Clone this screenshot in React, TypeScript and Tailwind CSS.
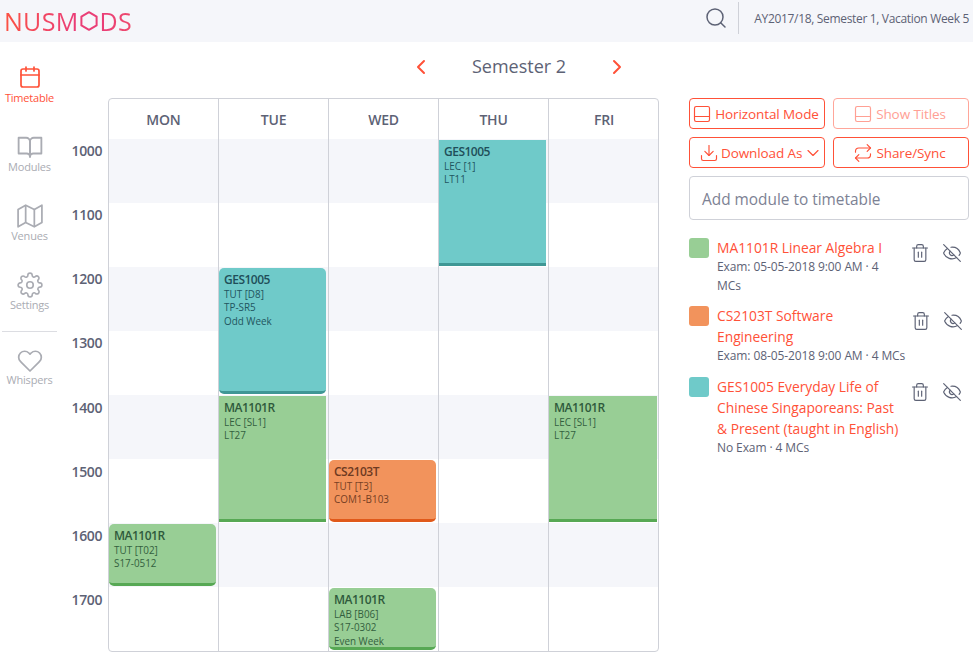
import { Calendar, ChevronDown, ChevronLeft, ChevronRight, Download, EyeOff, PanelBottom, Repeat, Search, Trash2 } from 'lucide-react';

const FONT = "font-['Open_Sans','Noto_Sans',sans-serif]";

function BookIcon({ size }: { size: number }) {
  return (
    <svg width={size} height={size} viewBox="0 0 24 24" fill="none" stroke="currentColor" strokeWidth="1.7" strokeLinejoin="round">
      <path d="M1.5 3.5h7a3.5 3.5 0 0 1 3.5 3.5v14a3 3 0 0 0-3-3H1.5z" />
      <path d="M22.5 3.5h-7A3.5 3.5 0 0 0 12 7v14a3 3 0 0 1 3-3h7.5z" />
    </svg>
  );
}

function MapIcon({ size }: { size: number }) {
  return (
    <svg width={size} height={size} viewBox="0 0 24 24" fill="none" stroke="currentColor" strokeWidth="1.6" strokeLinejoin="round">
      <path d="M1 6v16l7-4 8 4 7-4V2l-7 4-8-4z" />
      <path d="M8 2v16M16 6v16" />
    </svg>
  );
}

function GearIcon({ size }: { size: number }) {
  return (
    <svg width={size} height={size} viewBox="0 0 24 24" fill="none" stroke="currentColor" strokeWidth="1.5" strokeLinejoin="round">
      <circle cx="12" cy="12" r="3" />
      <path d="M19.4 15a1.65 1.65 0 0 0 .33 1.82l.06.06a2 2 0 0 1 0 2.83 2 2 0 0 1-2.83 0l-.06-.06a1.65 1.65 0 0 0-1.82-.33 1.65 1.65 0 0 0-1 1.51V21a2 2 0 0 1-2 2 2 2 0 0 1-2-2v-.09A1.65 1.65 0 0 0 9 19.4a1.65 1.65 0 0 0-1.82.33l-.06.06a2 2 0 0 1-2.83 0 2 2 0 0 1 0-2.83l.06-.06a1.65 1.65 0 0 0 .33-1.82 1.65 1.65 0 0 0-1.51-1H3a2 2 0 0 1-2-2 2 2 0 0 1 2-2h.09A1.65 1.65 0 0 0 4.6 9a1.65 1.65 0 0 0-.33-1.82l-.06-.06a2 2 0 0 1 0-2.83 2 2 0 0 1 2.83 0l.06.06a1.65 1.65 0 0 0 1.82.33H9a1.65 1.65 0 0 0 1-1.51V3a2 2 0 0 1 2-2 2 2 0 0 1 2 2v.09a1.65 1.65 0 0 0 1 1.51 1.65 1.65 0 0 0 1.82-.33l.06-.06a2 2 0 0 1 2.83 0 2 2 0 0 1 0 2.83l-.06.06a1.65 1.65 0 0 0-.33 1.82V9a1.65 1.65 0 0 0 1.51 1H21a2 2 0 0 1 2 2 2 2 0 0 1-2 2h-.09a1.65 1.65 0 0 0-1.51 1z" />
    </svg>
  );
}

function HeartIcon({ size }: { size: number }) {
  return (
    <svg width={size} height={size} viewBox="0 0 24 24" fill="none" stroke="currentColor" strokeWidth="1.6" strokeLinejoin="round">
      <path d="M20.84 4.61a5.5 5.5 0 0 0-7.78 0L12 5.67l-1.06-1.06a5.5 5.5 0 0 0-7.78 7.78l1.06 1.06L12 21.23l7.78-7.78 1.06-1.06a5.5 5.5 0 0 0 0-7.78z" />
    </svg>
  );
}

const NAV = [
  { label: 'Modules', icon: BookIcon },
  { label: 'Venues', icon: MapIcon },
  { label: 'Settings', icon: GearIcon },
];

const HOURS = ['1000', '1100', '1200', '1300', '1400', '1500', '1600', '1700'];
const STRIPES = ['row-[1/3]', 'row-[5/7]', 'row-[9/11]', 'row-[13/15]'];

const THEME = {
  green: { box: 'bg-[#98ce95] border-b-[#57a854]', title: 'text-[#2f5a3c]', text: 'text-[#33603e]' },
  teal: { box: 'bg-[#6fcac9] border-b-[#3f9795]', title: 'text-[#1f4f5a]', text: 'text-[#1f5560]' },
  orange: { box: 'bg-[#f2935c] border-b-[#e0591a]', title: 'text-[#6e3a22]', text: 'text-[#763f24]' },
};

type Lesson = {
  row: string;
  theme: keyof typeof THEME;
  code: string;
  lines: string[];
  square?: boolean;
};

const DAYS: { name: string; lessons: Lesson[] }[] = [
  {
    name: 'MON',
    lessons: [{ row: 'row-[13/15]', theme: 'green', code: 'MA1101R', lines: ['TUT [T02]', 'S17-0512'] }],
  },
  {
    name: 'TUE',
    lessons: [
      { row: 'row-[5/9]', theme: 'teal', code: 'GES1005', lines: ['TUT [D8]', 'TP-SR5', 'Odd Week'] },
      { row: 'row-[9/13]', theme: 'green', code: 'MA1101R', lines: ['LEC [SL1]', 'LT27'], square: true },
    ],
  },
  {
    name: 'WED',
    lessons: [
      { row: 'row-[11/13]', theme: 'orange', code: 'CS2103T', lines: ['TUT [T3]', 'COM1-B103'] },
      { row: 'row-[15/17]', theme: 'green', code: 'MA1101R', lines: ['LAB [B06]', 'S17-0302', 'Even Week'] },
    ],
  },
  {
    name: 'THU',
    lessons: [{ row: 'row-[1/5]', theme: 'teal', code: 'GES1005', lines: ['LEC [1]', 'LT11'], square: true }],
  },
  {
    name: 'FRI',
    lessons: [{ row: 'row-[9/13]', theme: 'green', code: 'MA1101R', lines: ['LEC [SL1]', 'LT27'], square: true }],
  },
];

const MODULES = [
  { color: 'bg-[#98ce95]', width: 'w-[188px]', title: 'MA1101R Linear Algebra I', info: 'Exam: 05-05-2018 9:00 AM · 4 MCs' },
  { color: 'bg-[#f2935c]', width: 'w-[194px]', title: 'CS2103T Software Engineering', info: 'Exam: 08-05-2018 9:00 AM · 4 MCs' },
  { color: 'bg-[#6fcac9]', width: 'w-[188px]', title: 'GES1005 Everyday Life of Chinese Singaporeans: Past & Present (taught in English)', info: 'No Exam · 4 MCs' },
];

function Logo() {
  return (
    <div className="flex items-center text-[25px] leading-none font-normal tracking-[0.3px]">
      <span className="bg-gradient-to-r from-[#fb5140] to-[#ea3c78] bg-clip-text text-transparent">NUSM</span>
      <svg width="20" height="20" viewBox="0 0 20 20" fill="none" stroke="#ea3f76" strokeWidth="2" className="mx-[0.5px]">
        <path d="M10 1.2 17.6 5.6V14.4L10 18.8 2.4 14.4V5.6Z" strokeLinejoin="round" />
      </svg>
      <span className="bg-gradient-to-r from-[#ea3c78] to-[#ee4a6c] bg-clip-text text-transparent">DS</span>
    </div>
  );
}

function ActionButton({ children, faded, layout = 'justify-center gap-[3px] pr-[3px]' }: { children: React.ReactNode; faded?: boolean; layout?: string }) {
  return (
    <button
      className={`${layout} flex h-[31px] items-center rounded-[4px] border text-[13.5px] tracking-[-0.1px] ${
        faded ? 'border-[#ffa69a] text-[#ffa094]' : 'border-[#ff5138] text-[#ff5138]'
      }`}
    >
      {children}
    </button>
  );
}

export default function App() {
  return (
    <div className={`${FONT} h-[660px] w-[973px] overflow-hidden bg-white text-[#5d6275]`}>
      <header className="flex h-[42px] items-center bg-[#f5f6fa] pr-1 pl-[4px]">
        <Logo />
        <Search size={24} strokeWidth={1.5} className="mt-[-6px] ml-auto text-[#5d6275]" />
        <div className="mt-[-6px] ml-[10px] h-8 w-px bg-[#cfd1d8]" />
        <span className="mt-[-5px] ml-[15px] text-[12px] tracking-[-0.33px]">AY2017/18, Semester 1, Vacation Week 5</span>
      </header>

      <div className="flex">
        <aside className="ml-[2px] w-[55px] shrink-0 pt-[23px]">
          <div className="flex h-[69px] flex-col items-center text-[#ff5138]">
            <Calendar size={24} strokeWidth={1.7} />
            <span className="mt-[1px] text-[11px] leading-[16px] tracking-[-0.2px]">Timetable</span>
          </div>
          {NAV.map(({ label, icon: Icon }) => (
            <div key={label} className="flex h-[69px] flex-col items-center text-[#aaacb3]">
              <Icon size={26} />
              <span className="mt-[-1px] text-[11px] leading-[16px] tracking-[-0.2px]">{label}</span>
            </div>
          ))}
          <div className="mt-[-10px] mb-[16px] h-px bg-[#dcdde2]" />
          <div className="flex flex-col items-center text-[#aaacb3]">
            <HeartIcon size={26} />
            <span className="mt-[-2px] text-[11px] leading-[16px] tracking-[-0.2px]">Whispers</span>
          </div>
        </aside>

        <main className="w-[602px] shrink-0">
          <div className="ml-[352px] flex h-[56px] w-[220px] items-center pb-[7px] text-[#5d6275]">
            <ChevronLeft size={24} strokeWidth={2} className="text-[#ff5138]" />
            <span className="mx-[38px] w-[96px] text-center text-[18px] whitespace-nowrap">Semester 2</span>
            <ChevronRight size={24} strokeWidth={2} className="text-[#ff5138]" />
          </div>

          <div className="flex">
            <div className="ml-px w-[44px] shrink-0 pt-[41.5px] text-right">
              {HOURS.map((h) => (
                <div key={h} className="h-[64.25px] pt-[1px] text-[14px] leading-[20px] font-semibold tracking-[-0.4px] text-[#5d6275]">
                  {h}
                </div>
              ))}
            </div>

            <div className="ml-[6px] flex h-[554px] w-[551px] shrink-0 overflow-hidden rounded-[4px] border border-[#cfd1d8]">
              {DAYS.map((day, i) => (
                <div key={day.name} className={`w-[110px] shrink-0 ${i < 4 ? 'border-r border-[#cfd1d8]' : 'w-[109px]'}`}>
                  <div className="flex h-[40px] items-center justify-center pt-[1px] text-[14px] font-semibold tracking-[-0.2px]">
                    {day.name}
                  </div>
                  <div className="grid grid-rows-[repeat(16,32px)]">
                    {STRIPES.map((s) => (
                      <div key={s} className={`${s} col-start-1 bg-[#f5f6fa]`} />
                    ))}
                    {day.lessons.map((l) => {
                      const t = THEME[l.theme];
                      return (
                        <div
                          key={l.code + l.row}
                          className={`${l.row} ${t.box} ${l.square ? '' : 'rounded-[5px]'} z-10 col-start-1 mt-px mr-[2px] mb-px border-b-[3px] px-[5px] pt-[3.6px] text-[9.9px] leading-[13.45px]`}
                        >
                          <div className={`${t.title} text-[12px] leading-[16.4px] font-semibold tracking-[-0.5px]`}>{l.code}</div>
                          {l.lines.map((line) => (
                            <div key={line} className={t.text}>{line}</div>
                          ))}
                        </div>
                      );
                    })}
                  </div>
                </div>
              ))}
            </div>
          </div>
        </main>

        <section className="ml-[30px] w-[280px] shrink-0 pt-[56px]">
          <div className="grid grid-cols-2 gap-x-2 gap-y-2">
            <ActionButton>
              <PanelBottom size={20} strokeWidth={1.4} />
              <span className="pt-px">Horizontal Mode</span>
            </ActionButton>
            <ActionButton faded>
              <PanelBottom size={20} strokeWidth={1.4} />
              <span className="pt-px">Show Titles</span>
            </ActionButton>
            <ActionButton layout="justify-start gap-[2px] pl-[9px]">
              <Download size={20} strokeWidth={1.4} />
              <span className="pt-px">Download As</span>
              <ChevronDown size={20} strokeWidth={1.4} className="ml-[-1px]" />
            </ActionButton>
            <ActionButton>
              <Repeat size={20} strokeWidth={1.4} />
              <span className="pt-px">Share/Sync</span>
            </ActionButton>
          </div>
          <div className="mt-2 flex h-[44px] items-center rounded-[4px] border border-[#cfd1d8] px-3 pt-[3px] text-[15.4px] text-[#7d8294]">
            Add module to timetable
          </div>

          <div className="mt-[17px] flex flex-col gap-[10px]">
            {MODULES.map((m) => (
              <div key={m.title} className="flex items-start">
                <div className={`${m.color} mt-[1px] h-5 w-5 shrink-0 rounded-[3px]`} />
                <div className={`${m.width} ml-2 shrink-0`}>
                  <div className="text-[13.8px] leading-[21px] text-[#ff5138]">{m.title}</div>
                  <div className="text-[12px] leading-[18.5px] tracking-[-0.1px]">{m.info}</div>
                </div>
                <div className="mt-[6px] ml-auto flex gap-[12px] pr-[7px] text-[#5d6275]">
                  <Trash2 size={20} strokeWidth={1.4} />
                  <EyeOff size={20} strokeWidth={1.4} />
                </div>
              </div>
            ))}
          </div>
        </section>
      </div>
    </div>
  );
}
